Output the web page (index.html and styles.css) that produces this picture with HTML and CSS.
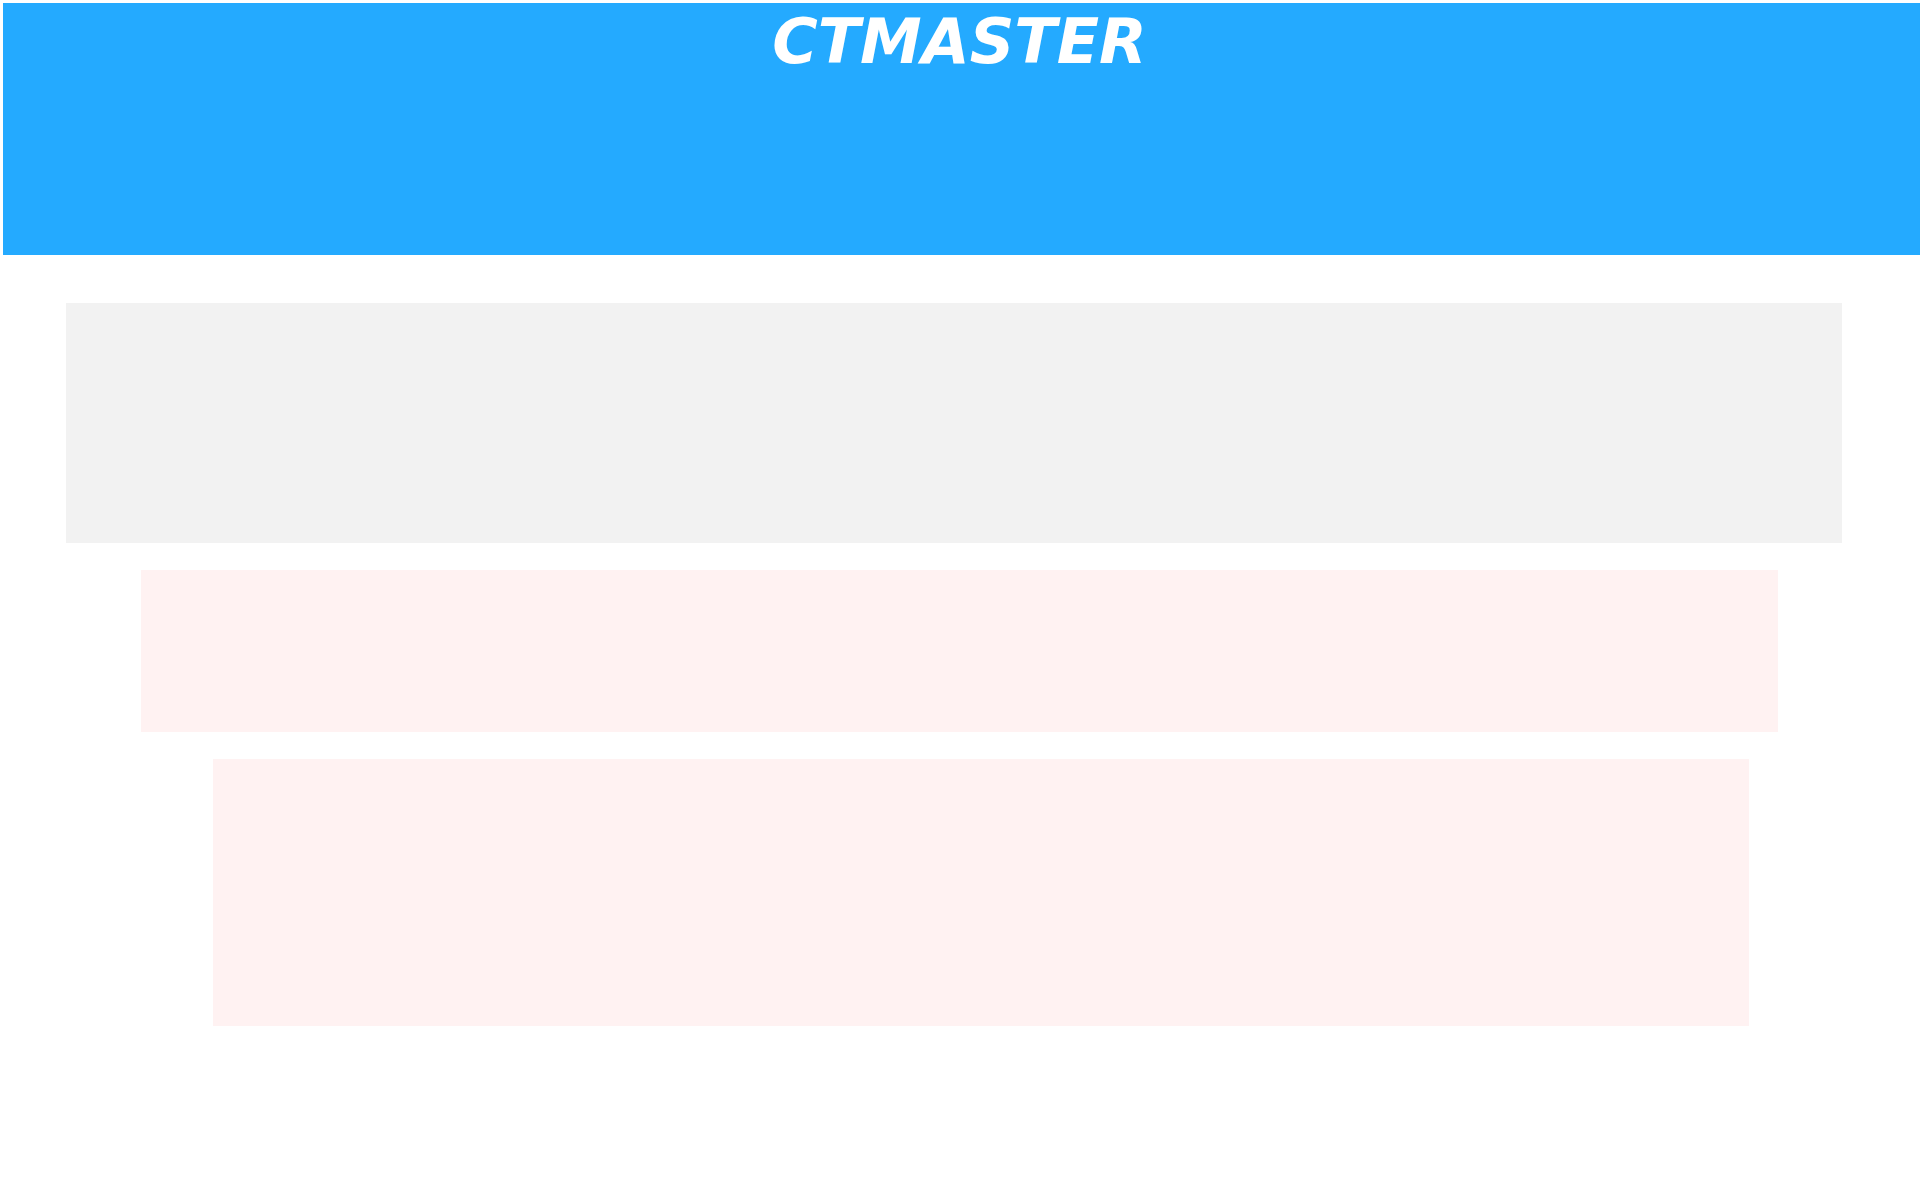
FILE: index.html
```html
<!DOCTYPE html>
<html>
<head>
<meta charset="utf-8">
<link rel="stylesheet" href="styles.css">
</head>
<body>
<header class="site-header">
  <h1 class="logo">CTMASTER</h1>
</header>
<main class="content">
  <section class="panel panel-gray"></section>
  <section class="panel panel-pink-a"></section>
  <section class="panel panel-pink-b"></section>
</main>
</body>
</html>
```
FILE: styles.css
```css
html, body {
  margin: 0;
  padding: 0;
  background: #ffffff;
}
body {
  font-family: "DejaVu Sans", sans-serif;
}
.site-header {
  margin: 3px 0 0 3px;
  height: 252px;
  background: #24aaff;
  box-sizing: border-box;
  display: flex;
  justify-content: center;
  align-items: flex-start;
}
.logo {
  margin: 0 0 0 -4px;
  padding-top: 3px;
  font-family: "DejaVu Sans", sans-serif;
  font-weight: bold;
  font-style: italic;
  font-size: 62px;
  line-height: 72px;
  color: #ffffff;
  letter-spacing: 0;
}
.content {
  display: flex;
  flex-direction: column;
  align-items: flex-start;
  padding-top: 48px;
  gap: 27px;
}
.panel {
  display: block;
}
.panel-gray {
  margin-left: 66px;
  width: 1776px;
  height: 240px;
  background: #f2f2f2;
}
.panel-pink-a {
  margin-left: 141px;
  width: 1637px;
  height: 162px;
  background: #fff2f2;
}
.panel-pink-b {
  margin-left: 213px;
  width: 1536px;
  height: 267px;
  background: #fff2f2;
}
```
